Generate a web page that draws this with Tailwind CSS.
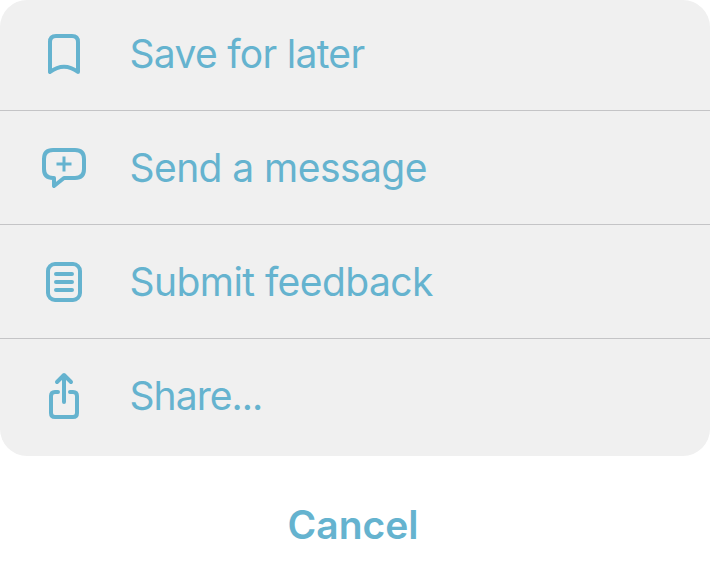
<!DOCTYPE html>
<html lang="en"><head><meta charset="utf-8"><title>Actions</title>
<script src="https://cdn.jsdelivr.net/npm/@tailwindcss/browser@4"></script></head>
<body class="bg-white w-[710px] h-[582px] overflow-hidden font-['Inter',sans-serif] text-[#65b3cf] text-[39px] leading-[48px]">
<main class="flex flex-col h-full">
<ul class="bg-[#f0f0f0] rounded-[27px] overflow-hidden h-[456px] shrink-0 tracking-[-0.56px]">
<li class="flex items-center h-[111px] border-b border-[#c4c4c6] pl-10 pb-0.5">
<svg class="w-12 h-12 mr-[41.500px]" viewBox="40 30 48 48" fill="none" stroke="currentColor" stroke-width="4" stroke-linejoin="round"><path d="M50 72V42Q50 36 56 36H72Q78 36 78 42V72Q64 61.500 50 72Z"/></svg><span class="tracking-[-0.7px]">Save for later</span></li>
<li class="flex items-center h-[114px] border-b border-[#c4c4c6] pl-10 pt-px">
<svg class="w-12 h-12 mr-[41.500px]" viewBox="40 144 48 48" fill="none" stroke="currentColor" stroke-width="4" stroke-linejoin="round"><path d="M53 150H75Q84 150 84 159V169Q84 178 75 178H64L54 186V178H53Q44 178 44 169V159Q44 150 53 150Z"/><path d="M56.500 164H71.500M64 156.500V171.500" stroke-width="3"/></svg><span>Send a message</span></li>
<li class="flex items-center h-[114px] border-b border-[#c4c4c6] pl-10 pt-px">
<svg class="w-12 h-12 mr-[41.500px]" viewBox="40 258 48 48" fill="none" stroke="currentColor" stroke-width="4" stroke-linecap="round"><rect x="48" y="264" width="32" height="36" rx="7"/><path d="M56 274H72M56 282H72M56 290H72"/></svg><span>Submit feedback</span></li>
<li class="flex items-center h-[117px] pl-10 pb-[3px]">
<svg class="w-12 h-12 mr-[41.500px]" viewBox="40 372 48 48" fill="none" stroke="currentColor" stroke-width="4" stroke-linecap="round" stroke-linejoin="round"><path d="M58 392H55Q51 392 51 396V413Q51 417 55 417H73Q77 417 77 413V396Q77 392 73 392H70M64 402V376M57 382L64 375L71 382"/></svg><span class="tracking-[-0.95px]">Share...</span></li>
</ul>
<button class="flex-1 flex items-center justify-center pt-3 pr-[4px] font-semibold">Cancel</button>
</main></body></html>
